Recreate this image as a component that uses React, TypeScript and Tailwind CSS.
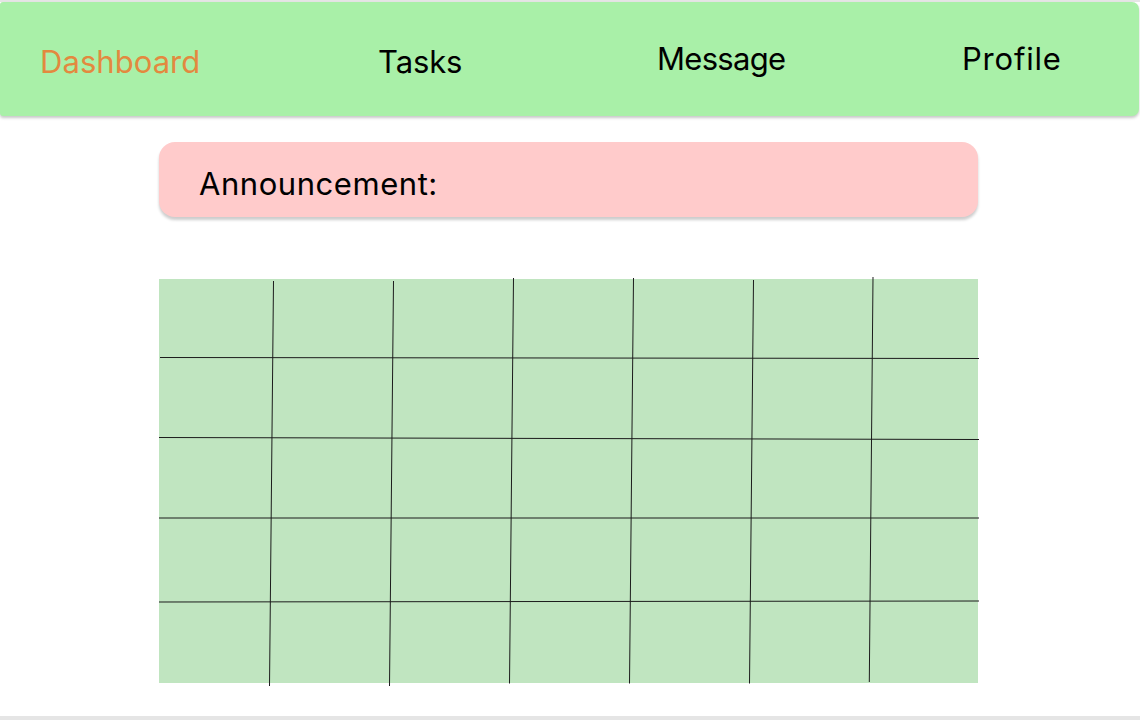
import React from "react";

const vLines = [
  [273.5, 281, 269.5, 686],
  [393.5, 281, 389.5, 686],
  [513.5, 278, 509.5, 683.5],
  [633.5, 278, 629.5, 683.5],
  [753.5, 280, 749.5, 683.5],
  [873, 277, 869.3, 682],
];
const hLines = [
  [160, 357.5, 979, 358.5],
  [159, 437.5, 979, 439.5],
  [159, 518, 979, 518],
  [159, 602, 979, 601],
];

export default function App() {
  const ox = 159;
  const oy = 279;
  return (
    <div
      className="w-[1140px] h-[720px] bg-[#e5e5e5] pt-[2px] pb-[4px] overflow-hidden"
      style={{ fontFamily: "Inter, 'Noto Sans', sans-serif" }}
    >
      <div className="h-full bg-white flex flex-col">
        <nav className="h-[114px] w-[1139px] bg-[#a9f0a8] rounded-l-[3px] rounded-r-[7px] shadow-[0_2px_3px_rgba(0,0,0,0.22)] flex items-start pl-[40px] text-[31px] leading-[31px] text-black">
          <div className="w-[338px] pt-[44px] text-[#e3893f] tracking-[0.05px]">Dashboard</div>
          <div className="w-[279px] pt-[44px] tracking-[-0.1px]">Tasks</div>
          <div className="w-[305px] pt-[41px] tracking-[-0.7px]">Message</div>
          <div className="pt-[41px] tracking-[0.8px]">Profile</div>
        </nav>
        <div className="pl-[159px] pt-[26px]">
          <div className="w-[819px] h-[75px] bg-[#ffcbcb] rounded-[16px] shadow-[0_3px_3px_rgba(0,0,0,0.2)] pl-[40px] pt-[26px] text-[31px] leading-[31px] text-black tracking-[0.55px]">
            Announcement:
          </div>
          <div className="relative mt-[62px] w-[819px] h-[404px] bg-[#c0e5c0]">
            <svg
              className="absolute left-0 top-0 overflow-visible"
              width={819}
              height={404}
              viewBox="0 0 819 404"
            >
              {vLines.map(([x1, y1, x2, y2], i) => (
                <line
                  key={"v" + i}
                  x1={x1 - ox}
                  y1={y1 - oy}
                  x2={x2 - ox}
                  y2={y2 - oy}
                  stroke="#1c1c1c"
                  strokeWidth={1}
                />
              ))}
              {hLines.map(([x1, y1, x2, y2], i) => (
                <line
                  key={"h" + i}
                  x1={x1 - ox}
                  y1={y1 - oy}
                  x2={x2 - ox}
                  y2={y2 - oy}
                  stroke="#1c1c1c"
                  strokeWidth={1}
                />
              ))}
            </svg>
          </div>
        </div>
      </div>
    </div>
  );
}
